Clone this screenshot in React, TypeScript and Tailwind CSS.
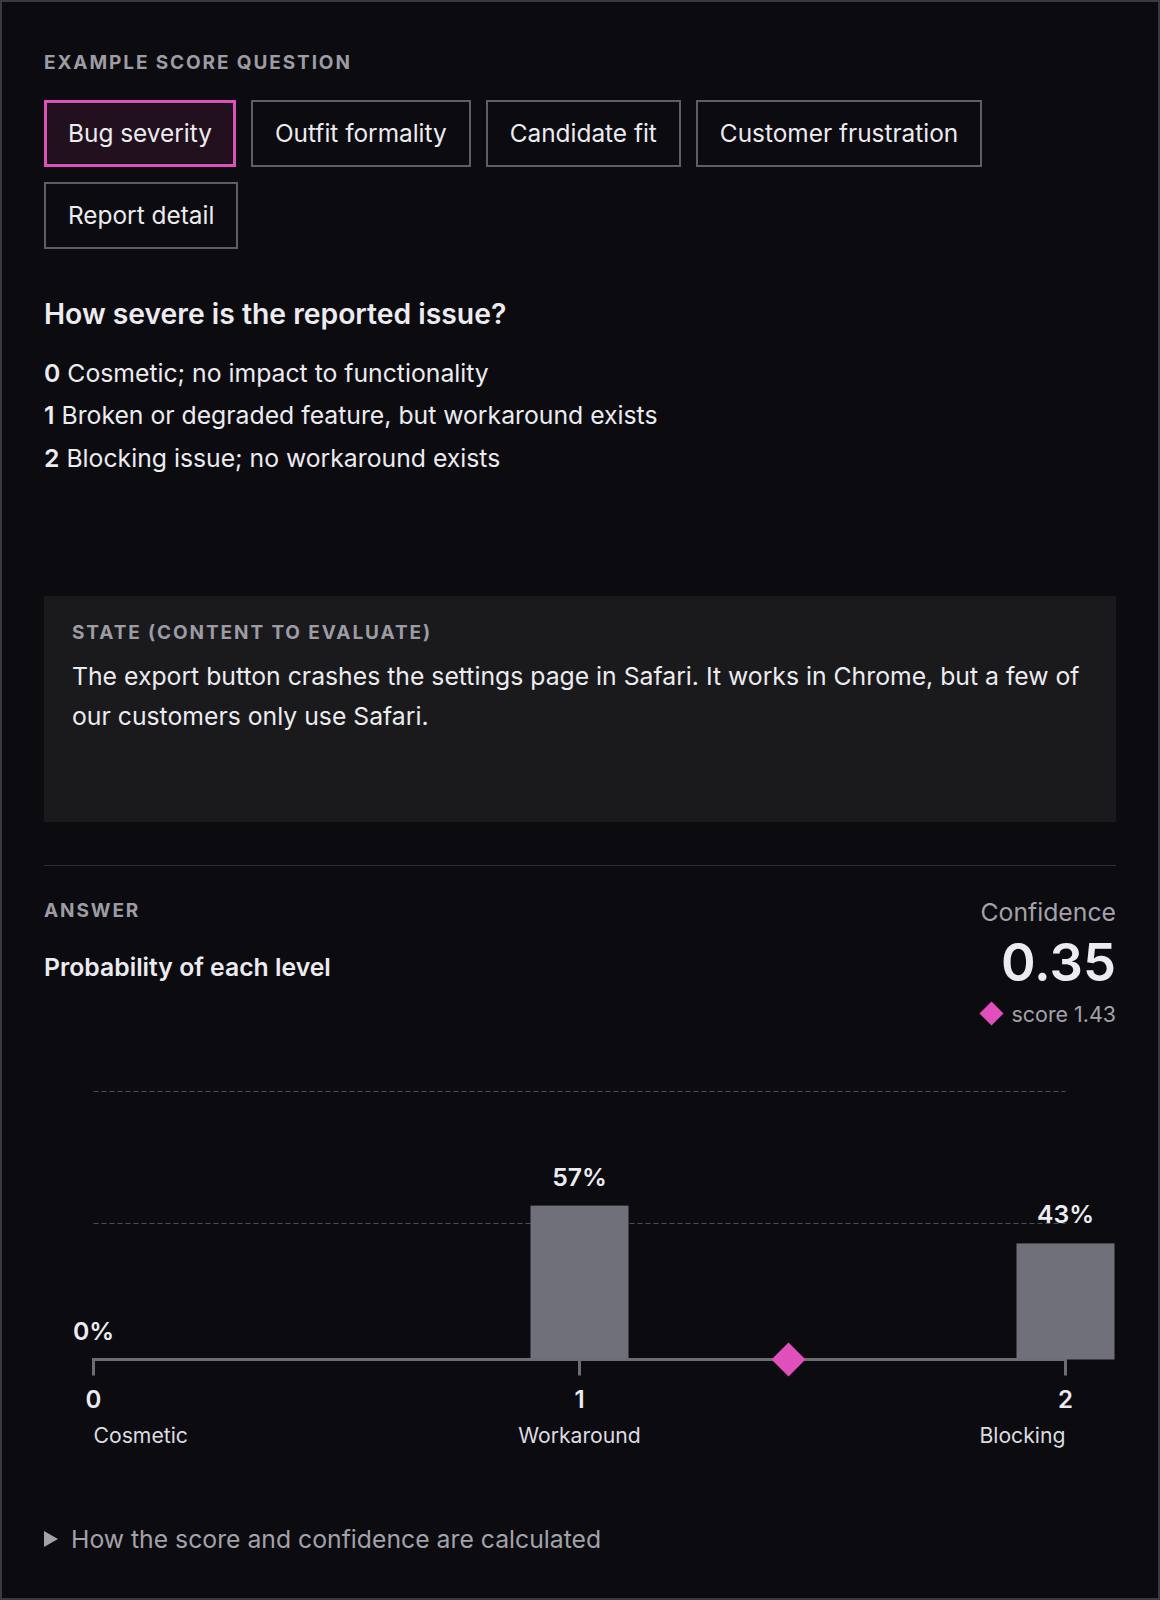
import { useState } from 'react';

const questions = ['Bug severity', 'Outfit formality', 'Candidate fit', 'Customer frustration', 'Report detail'];

const levels = [
  { value: 0, text: 'Cosmetic; no impact to functionality', short: 'Cosmetic', p: 0 },
  { value: 1, text: 'Broken or degraded feature, but workaround exists', short: 'Workaround', p: 0.57 },
  { value: 2, text: 'Blocking issue; no workaround exists', short: 'Blocking', p: 0.43 },
];

const score = 1.43;
const confidence = 0.35;

// chart geometry, in px of the svg
const W = 1071;
const H = 390;
const X0 = 49.5;
const X2 = 1021.5;
const BASE = 289.5;
const FULL = 270;
const BAR = 98;

const xAt = (v: number) => X0 + (v / 2) * (X2 - X0);

function Chart() {
  return (
    <svg width={W} height={H} viewBox={`0 0 ${W} ${H}`} className="block overflow-visible">
      {[136, 268].map((g) => (
        <line key={g} x1={X0} x2={X2} y1={BASE - g} y2={BASE - g} stroke="#4e4e56" strokeWidth={1} strokeDasharray="5 3" />
      ))}
      {levels.map((l) => {
        const h = l.p * FULL;
        const x = xAt(l.value);
        return (
          <g key={l.value}>
            {h > 0 && <rect x={x - BAR / 2} y={BASE - h} width={BAR} height={h} fill="#70707a" />}
            <text x={x} y={BASE - h - 20} textAnchor="middle" fill="#ececf0" fontSize={24.75} fontWeight={600}>
              {Math.round(l.p * 100)}%
            </text>
          </g>
        );
      })}
      <line x1={X0 - 1.5} x2={X2 + 1.5} y1={BASE} y2={BASE} stroke="#6c6c74" strokeWidth={3} />
      {levels.map((l) => (
        <line key={l.value} x1={xAt(l.value)} x2={xAt(l.value)} y1={BASE} y2={BASE + 16} stroke="#6c6c74" strokeWidth={3} />
      ))}
      <polygon
        points={`${xAt(score)},${BASE - 17} ${xAt(score) + 17},${BASE} ${xAt(score)},${BASE + 17} ${xAt(score) - 17},${BASE}`}
        fill="#e14fbc"
      />
      {levels.map((l) => (
        <text key={l.value} x={xAt(l.value)} y={BASE + 48} textAnchor="middle" fill="#ececf0" fontSize={24} fontWeight={600}>
          {l.value}
        </text>
      ))}
      {levels.map((l, i) => (
        <text
          key={l.value}
          x={xAt(l.value)}
          y={BASE + 83}
          textAnchor={i === 0 ? 'start' : i === 2 ? 'end' : 'middle'}
          fill="#dcdce0"
          fontSize={21.2}
        >
          {l.short}
        </text>
      ))}
    </svg>
  );
}

export default function App() {
  const [active, setActive] = useState('Bug severity');

  return (
    <div className="min-h-screen bg-[#0c0b10] font-['Inter',sans-serif] text-[#ececf0]">
      <div className="h-[1600px] border-2 border-[#3a3a41] px-[42px] pt-[49px]">
        <div className="text-[19px] leading-[24px] font-bold tracking-[0.1em] text-[#9d9ca5]">EXAMPLE SCORE QUESTION</div>

        <div className="mt-[25px] flex flex-wrap gap-[15px]">
          {questions.map((q) => (
            <button
              key={q}
              onClick={() => setActive(q)}
              className={
                q === active
                  ? 'h-[67px] border-[3px] border-[#e14fbc] bg-[#22101f] px-[21px] text-[24.4px] text-[#ececf0] shadow-[inset_0_0_0_1px_#0c0b10]'
                  : 'h-[67px] border-2 border-[#5e5e66] bg-[#0c0b10] px-[22px] text-[24.4px] text-[#ececf0]'
              }
            >
              {q}
            </button>
          ))}
        </div>

        <h2 className="mt-[49px] text-[28.3px] leading-[32px] font-semibold">How severe is the reported issue?</h2>

        <div className="mt-[22px]">
          {levels.map((l) => (
            <div key={l.value} className="text-[24.75px] leading-[42.3px]">
              <span className="font-semibold">{l.value}</span> {l.text}
            </div>
          ))}
        </div>

        <div className="mt-[117px] h-[226px] bg-[#1a1a1d] px-[28px] pt-[25px]">
          <div className="text-[19px] leading-[24px] font-bold tracking-[0.1em] text-[#9d9ca5]">STATE (CONTENT TO EVALUATE)</div>
          <p className="mt-[11px] text-[24.75px] leading-[40px]">
            The export button crashes the settings page in Safari. It works in Chrome, but a few of our customers only use Safari.
          </p>
        </div>

        <div className="mt-[43px] h-px bg-[#2c2c32]" />

        <div className="flex items-start justify-between">
          <div className="mt-[33px]">
            <div className="text-[19px] leading-[24px] font-bold tracking-[0.1em] text-[#9d9ca5]">ANSWER</div>
            <div className="mt-[29px] text-[24.75px] leading-[30px] font-semibold">Probability of each level</div>
          </div>
          <div className="mt-[31px] flex flex-col items-end">
            <div className="text-[24.75px] leading-[30px] text-[#a3a2ab]">Confidence</div>
            <div className="mt-[8px] text-[52.5px] leading-[54px] font-semibold">{confidence.toFixed(2)}</div>
            <div className="mt-[11px] flex items-center gap-[12px]">
              <span className="h-[17px] w-[17px] rotate-45 bg-[#e14fbc]" />
              <span className="text-[21.4px] leading-[28px] text-[#a3a2ab]">score {score.toFixed(2)}</span>
            </div>
          </div>
        </div>

        <div className="mt-[42px]">
          <Chart />
        </div>

        <div className="mt-[64px] flex items-center gap-[13px] text-[24.75px] leading-[30px] text-[#a3a2ab]">
          <svg width="14" height="16" viewBox="0 0 14 16" className="shrink-0">
            <polygon points="0,0 14,8 0,16" fill="#a3a2ab" />
          </svg>
          <span>How the score and confidence are calculated</span>
        </div>
      </div>
    </div>
  );
}
